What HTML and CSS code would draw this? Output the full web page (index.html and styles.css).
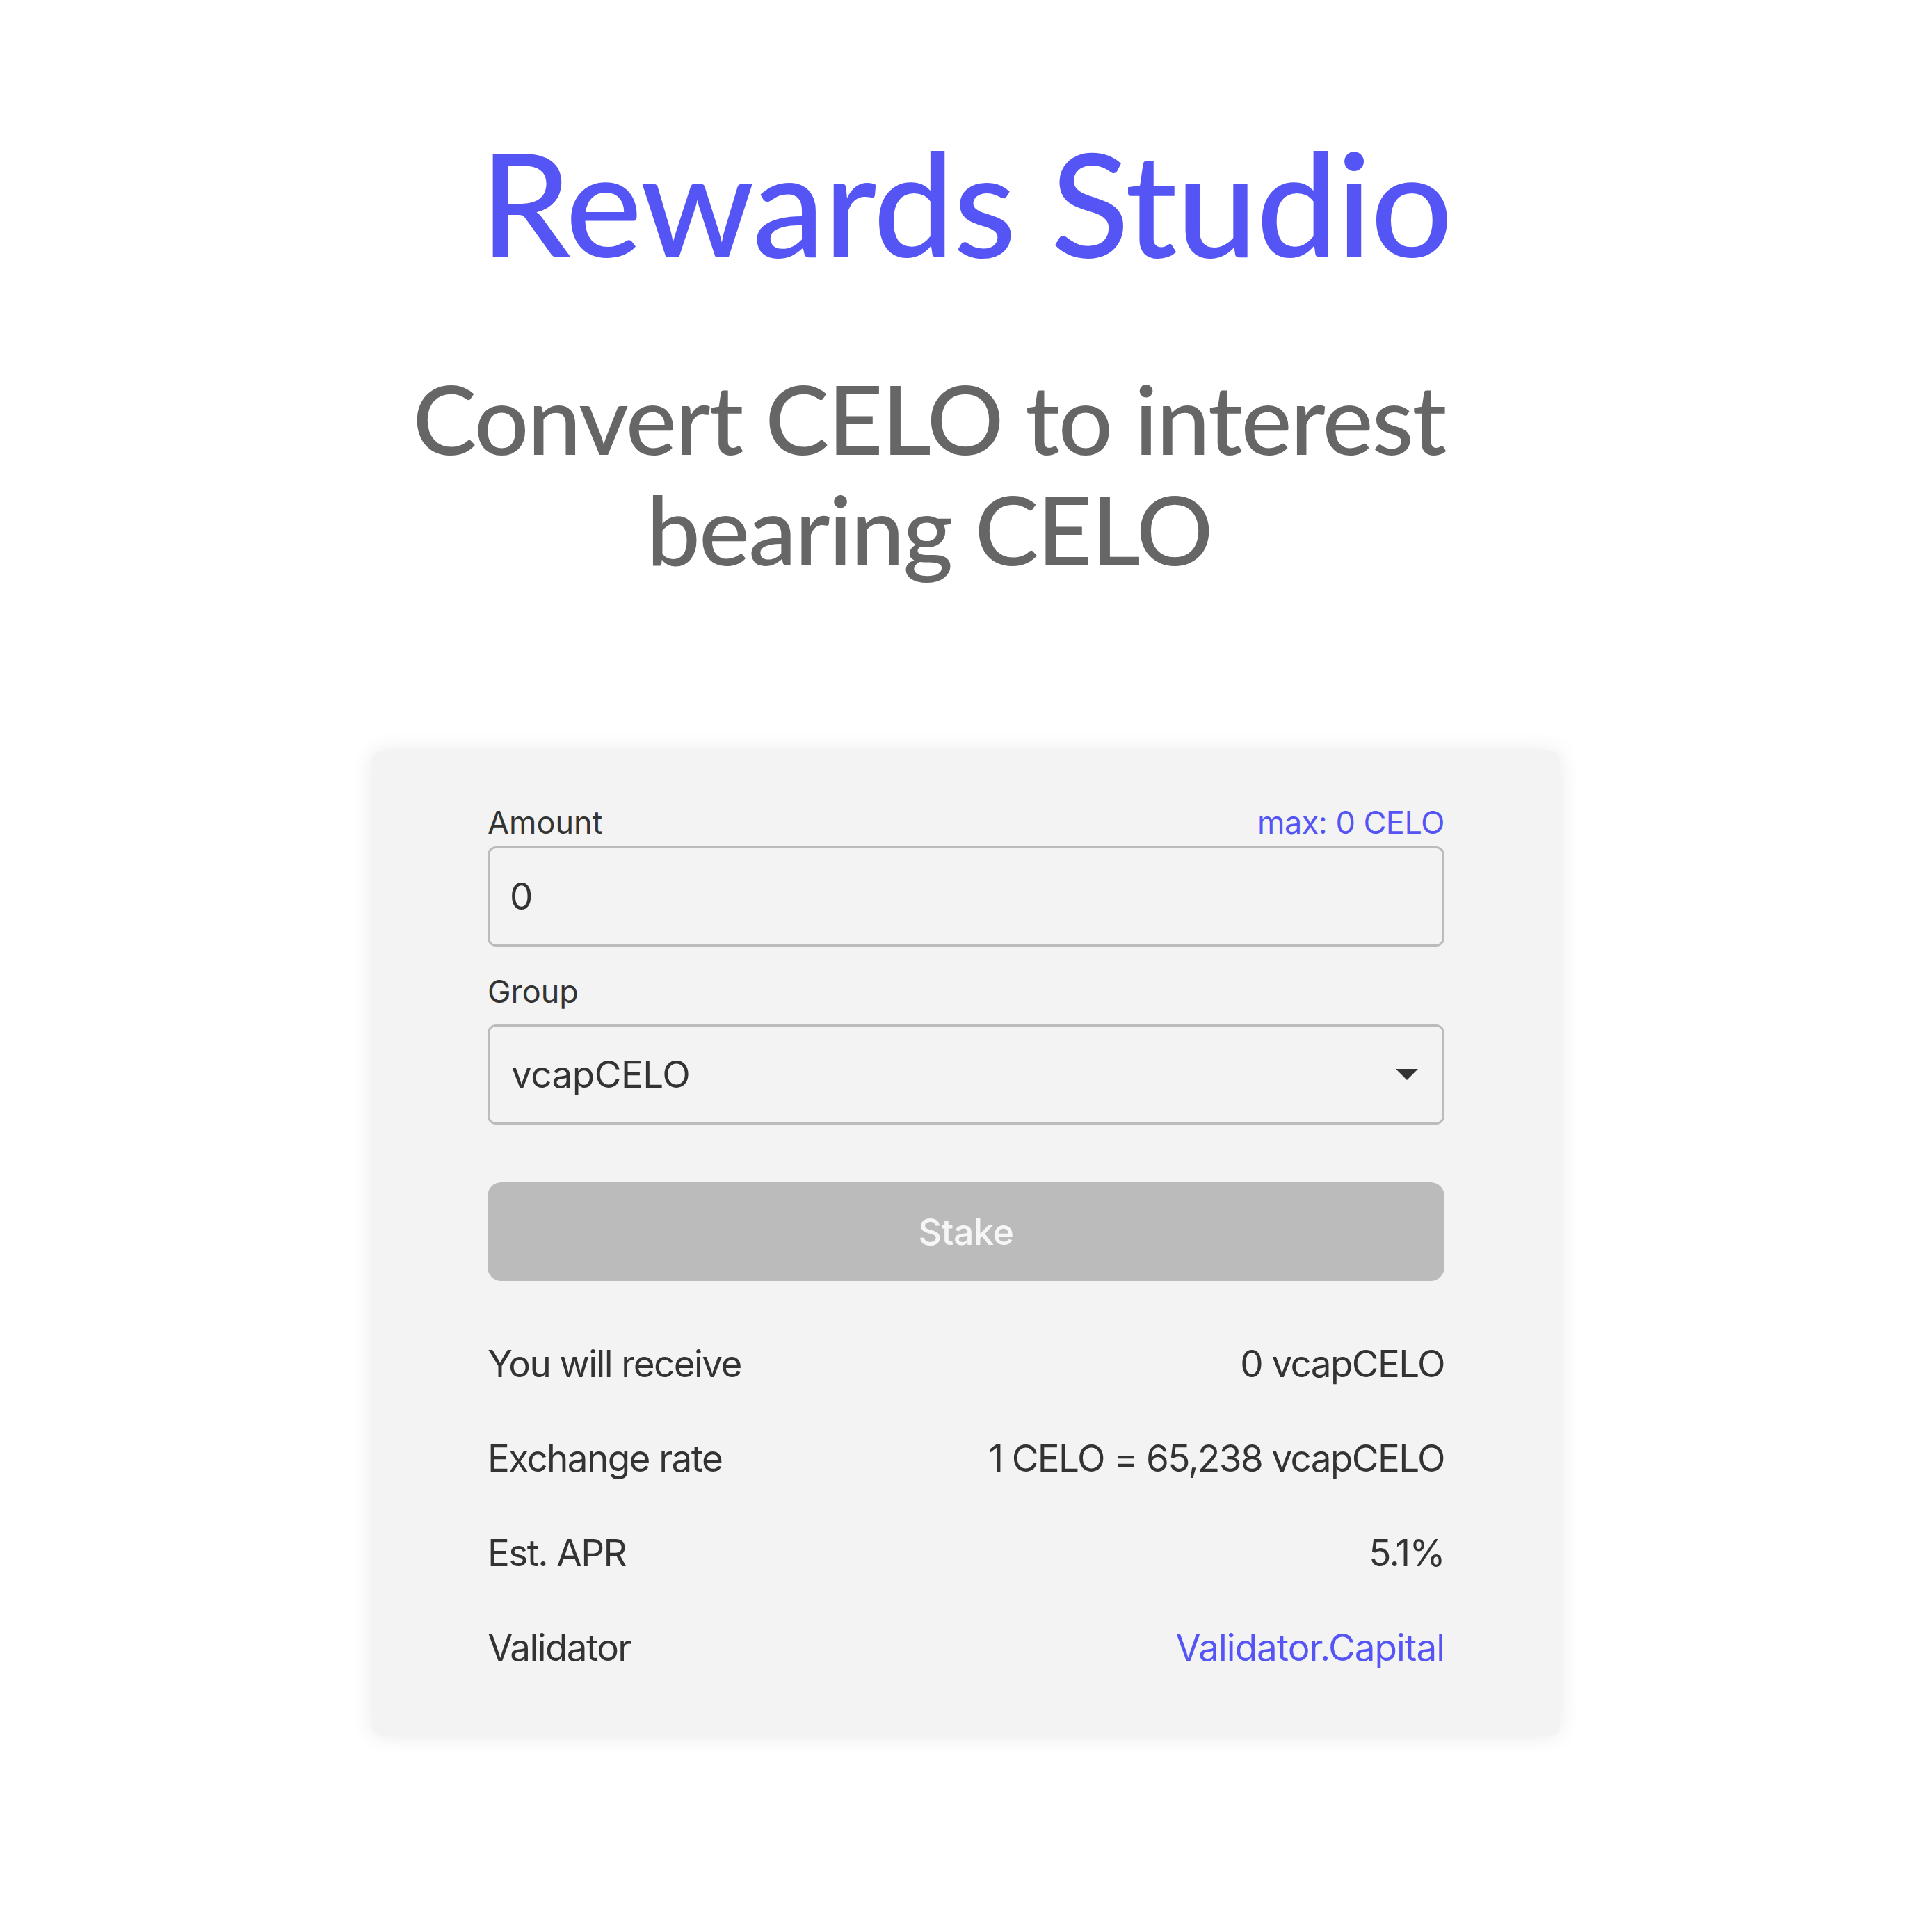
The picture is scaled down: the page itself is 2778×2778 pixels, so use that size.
FILE: index.html
```html
<!DOCTYPE html>
<html lang="en">
<head>
<meta charset="utf-8">
<title>Rewards Studio</title>
<link rel="stylesheet" href="styles.css">
</head>
<body>
<main class="page">
  <h1 class="title">Rewards Studio</h1>
  <h2 class="subtitle">Convert CELO to interest bearing CELO</h2>

  <section class="card">
    <div class="label-row">
      <span class="label">Amount</span>
      <a class="max-link" href="#">max: 0 CELO</a>
    </div>
    <input class="field field-input" type="text" value="0">

    <div class="label-row label-row-group">
      <span class="label">Group</span>
    </div>
    <div class="field field-select">
      <span class="select-value">vcapCELO</span>
      <svg class="caret" width="32" height="16" viewBox="0 0 32 16"><path d="M0 0 H32 L16 16 Z" fill="#333"/></svg>
    </div>

    <button class="stake-btn" type="button" disabled>Stake</button>

    <div class="info">
      <div class="info-row"><span>You will receive</span><span>0 vcapCELO</span></div>
      <div class="info-row"><span>Exchange rate</span><span>1 CELO = 65,238 vcapCELO</span></div>
      <div class="info-row"><span>Est. APR</span><span>5.1%</span></div>
      <div class="info-row"><span>Validator</span><a class="link" href="#">Validator.Capital</a></div>
    </div>
  </section>
</main>
</body>
</html>
```

FILE: styles.css
```css
* { box-sizing: border-box; }

html, body {
  margin: 0;
  padding: 0;
  background: #ffffff;
}

.page {
  display: flex;
  flex-direction: column;
  align-items: center;
  padding-bottom: 200px;
}

.title {
  margin: 165px 0 0 0;
  font-family: "Lato", "Noto Sans", sans-serif;
  font-weight: 500;
  font-size: 208px;
  letter-spacing: -1.5px;
  line-height: 250px;
  color: #5555f6;
  text-align: center;
}

.subtitle {
  margin: 106px 0 0 0;
  width: 1700px;
  padding-right: 106px;
  font-family: "Lato", "Noto Sans", sans-serif;
  font-weight: 500;
  font-size: 138px;
  letter-spacing: -2px;
  line-height: 159px;
  color: #666666;
  text-align: center;
}

.card {
  margin-top: 241px;
  width: 1708px;
  padding: 76px 166px 96px 166px;
  background: #f2f3f2;
  border-radius: 14px;
  box-shadow: 0 0 32px rgba(0, 0, 0, 0.09);
  display: flex;
  flex-direction: column;
  font-family: "Inter", "Liberation Sans", sans-serif;
  color: #333333;
}

.label-row {
  display: flex;
  justify-content: space-between;
  align-items: baseline;
  font-size: 45px;
  line-height: 54px;
}

.label-row-group {
  margin-top: 38px;
}

.label { color: #333333; }

.max-link {
  color: #5555f6;
  text-decoration: none;
  letter-spacing: -0.5px;
}

.field {
  height: 144px;
  border: 3px solid #bbbbbb;
  border-radius: 12px;
  background: #f2f3f2;
  font-family: "Inter", "Liberation Sans", sans-serif;
  font-size: 53px;
  letter-spacing: -0.5px;
  color: #333333;
}

.field-input {
  margin-top: 7px;
  width: 100%;
  padding: 0 29px;
  outline: none;
}

.field-select {
  margin-top: 20px;
  display: flex;
  align-items: center;
  justify-content: space-between;
  padding: 0 35px 0 31px;
}

.caret { display: block; }

.stake-btn {
  margin-top: 83px;
  height: 142px;
  width: 100%;
  border: none;
  border-radius: 20px;
  background: #bbbbbb;
  color: #f6f6f6;
  font-family: "Inter", "Liberation Sans", sans-serif;
  font-weight: 500;
  font-size: 52px;
  letter-spacing: -0.5px;
  padding: 0;
}

.info {
  margin-top: 88px;
  display: flex;
  flex-direction: column;
  gap: 74px;
}

.info-row {
  display: flex;
  justify-content: space-between;
  font-size: 53px;
  line-height: 62px;
  letter-spacing: -1.6px;
  color: #333333;
}

.link {
  color: #5555f6;
  text-decoration: none;
  letter-spacing: -1px;
}
```
